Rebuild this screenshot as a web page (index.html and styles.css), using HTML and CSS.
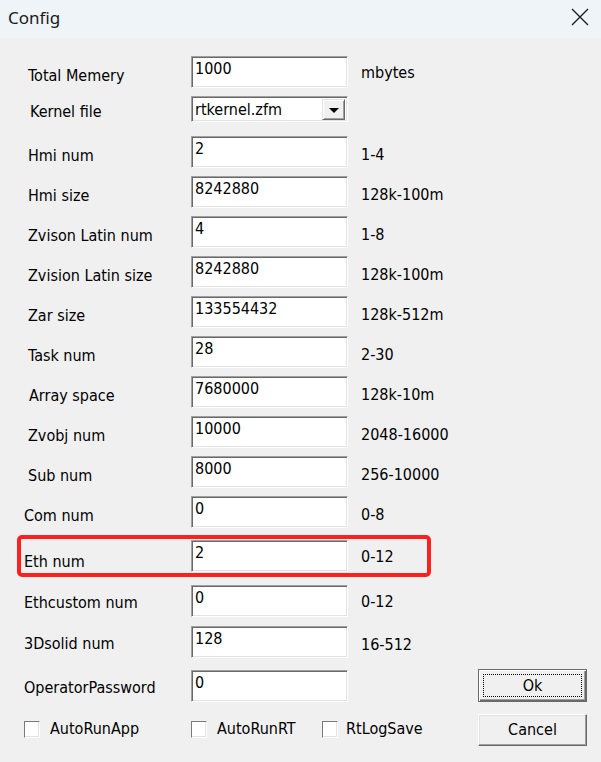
FILE: index.html
```html
<!DOCTYPE html>
<html>
<head>
<meta charset="utf-8">
<title>Config</title>
<link rel="stylesheet" href="styles.css">
</head>
<body>
<div class="window">
  <div class="titlebar">
    <span class="title">Config</span>
    <svg class="close" width="18" height="18" viewBox="0 0 18 18"><path d="M1 1 L17 17 M17 1 L1 17" stroke="#1a1a1a" stroke-width="1.3" fill="none"/></svg>
  </div>
  <div class="body">
    <div class="form">
      <div class="row"><span class="label ind4">Total Memery</span><div class="field">1000</div><span class="hint up">mbytes</span></div>
      <div class="row"><span class="label ind6 combo-label">Kernel file</span><div class="combo"><span class="combo-text">rtkernel.zfm</span><span class="drop"><span class="tri"></span></span></div></div>
      <div class="row"><span class="label ind4">Hmi num</span><div class="field">2</div><span class="hint">1-4</span></div>
      <div class="row"><span class="label ind4">Hmi size</span><div class="field">8242880</div><span class="hint">128k-100m</span></div>
      <div class="row"><span class="label ind4">Zvison Latin num</span><div class="field">4</div><span class="hint">1-8</span></div>
      <div class="row"><span class="label ind4">Zvision Latin size</span><div class="field">8242880</div><span class="hint">128k-100m</span></div>
      <div class="row"><span class="label ind4">Zar size</span><div class="field">133554432</div><span class="hint">128k-512m</span></div>
      <div class="row"><span class="label ind4">Task num</span><div class="field">28</div><span class="hint">2-30</span></div>
      <div class="row"><span class="label ind5">Array space</span><div class="field">7680000</div><span class="hint">128k-10m</span></div>
      <div class="row"><span class="label ind4">Zvobj num</span><div class="field">10000</div><span class="hint">2048-16000</span></div>
      <div class="row"><span class="label ind4">Sub num</span><div class="field">8000</div><span class="hint">256-10000</span></div>
      <div class="row"><span class="label">Com num</span><div class="field">0</div><span class="hint">0-8</span></div>
      <div class="row row-eth"><span class="label low">Eth num</span><div class="field">2</div><span class="hint up">0-12</span><div class="highlight"></div></div>
      <div class="row row-gap"><span class="label high">Ethcustom num</span><div class="field">0</div><span class="hint high">0-12</span></div>
      <div class="row"><span class="label high">3Dsolid num</span><div class="field">128</div><span class="hint">16-512</span></div>
      <div class="row row-gap4"><span class="label high">OperatorPassword</span><div class="field">0</div></div>
      <div class="checks">
        <label class="check c1"><span class="box"></span><span>AutoRunApp</span></label>
        <label class="check c2"><span class="box"></span><span>AutoRunRT</span></label>
        <label class="check c3"><span class="box"></span><span>RtLogSave</span></label>
      </div>
    </div>
    <div class="buttons">
      <div class="btn btn-default"><span class="focus">Ok</span></div>
      <div class="btn">Cancel</div>
    </div>
  </div>
</div>
</body>
</html>
```
FILE: styles.css
```css
* { box-sizing: border-box; }
html, body { margin: 0; padding: 0; }
body {
  width: 601px;
  height: 762px;
  background: #f0f0f0;
  font-family: "DejaVu Sans Condensed", "Liberation Sans", Arial, sans-serif;
  font-size: 16px;
  color: #000;
  overflow: hidden;
}
.window { width: 601px; height: 762px; display: flex; flex-direction: column; }
.titlebar {
  height: 38px;
  background: #eff4f9;
  display: flex;
  align-items: center;
  justify-content: space-between;
  padding: 0 12px 0 8px;
  flex: none;
}
.title {
  font-family: "Noto Sans", "Open Sans", sans-serif;
  font-size: 17px;
  color: #1a1a1a;
  margin-top: -4px;
}
.close { margin-top: -4px; }
.body {
  flex: 1;
  display: flex;
  background: #f0f0f0;
}
.form {
  padding: 18px 0 0 24px;
  display: flex;
  flex-direction: column;
}
.row {
  position: relative;
  display: grid;
  grid-template-columns: 167px 157px auto;
  height: 40px;
  align-items: start;
}
.row-eth { height: 45px; margin-top: 4px; }
.row-gap { height: 41px; }
.row-gap4 { margin-top: 4px; }
.label { padding-top: 10px; line-height: 20px; white-space: nowrap; }
.combo-label { padding-top: 6px; }
.label.low { padding-top: 12px; }
.label.high { padding-top: 8px; }
.ind4 { padding-left: 4px; }
.ind5 { padding-left: 5px; }
.ind6 { padding-left: 6px; }
.hint { padding: 9px 0 0 13px; line-height: 20px; white-space: nowrap; }
.hint.up { padding-top: 7px; }
.hint.high { padding-top: 7px; }
.field {
  height: 32px;
  background: #fff;
  border-top: 1px solid #a0a0a0;
  border-left: 1px solid #a0a0a0;
  border-right: 1px solid #fff;
  border-bottom: 1px solid #fff;
  box-shadow: inset 1px 1px 0 #696969, inset -1px -1px 0 #e3e3e3;
  padding: 2px 0 0 3px;
  line-height: 20px;
}
.combo {
  height: 26px;
  background: #fff;
  border-top: 1px solid #a0a0a0;
  border-left: 1px solid #a0a0a0;
  border-right: 1px solid #fff;
  border-bottom: 1px solid #fff;
  box-shadow: inset 1px 1px 0 #696969, inset -1px -1px 0 #e3e3e3;
  display: flex;
  align-items: flex-start;
  padding: 2px;
}
.combo-text { flex: 1; padding: 1px 0 0 1px; line-height: 20px; }
.drop {
  width: 23px;
  height: 21px;
  background: #f0f0f0;
  border-top: 1px solid #e3e3e3;
  border-left: 1px solid #e3e3e3;
  border-right: 1px solid #696969;
  border-bottom: 1px solid #696969;
  box-shadow: inset 1px 1px 0 #fff, inset -1px -1px 0 #a0a0a0;
  display: flex;
  align-items: center;
  justify-content: center;
}
.tri {
  width: 0; height: 0;
  border-left: 5px solid transparent;
  border-right: 5px solid transparent;
  border-top: 5px solid #000;
  margin-top: 1px;
}
.highlight {
  position: absolute;
  left: -7px;
  top: -5px;
  width: 414px;
  height: 42px;
  border: 4px solid #fb2120;
  border-radius: 5px;
  pointer-events: none;
}
.checks {
  display: flex;
  align-items: center;
  padding-top: 10px;
  height: 28px;
}
.check { display: flex; align-items: center; line-height: 20px; }
.box {
  width: 16px;
  height: 17px;
  background: #fff;
  border-top: 1px solid #7a7a7a;
  border-left: 1px solid #7a7a7a;
  border-right: 1px solid #fff;
  border-bottom: 1px solid #fff;
  box-shadow: inset -1px -1px 0 #e3e3e3;
}
.c1 .box { margin-right: 10px; }
.c1 { width: 167px; }
.c2 .box { margin-right: 10px; }
.c2 { width: 131px; }
.c3 .box { margin-right: 8px; }
.buttons {
  margin-left: auto;
  padding: 0 14px 16px 0;
  display: flex;
  flex-direction: column;
  justify-content: flex-end;
  gap: 12px;
}
.btn {
  width: 109px;
  height: 32px;
  background: #f0f0f0;
  border-top: 1px solid #fff;
  border-left: 1px solid #fff;
  border-right: 1px solid #696969;
  border-bottom: 1px solid #696969;
  box-shadow: inset -1px -1px 0 #a0a0a0, inset 1px 1px 0 #e3e3e3;
  display: flex;
  align-items: center;
  justify-content: center;
  line-height: 20px;
}
.btn-default {
  height: 33px;
  border: 1px solid #6a6a6a;
  box-shadow: inset 1px 1px 0 #fff, inset -1px -1px 0 #696969, inset -2px -2px 0 #a0a0a0;
  padding: 4px;
}
.focus {
  flex: 1;
  align-self: stretch;
  border: 1px dotted #000;
  display: flex;
  align-items: center;
  justify-content: center;
}
```
